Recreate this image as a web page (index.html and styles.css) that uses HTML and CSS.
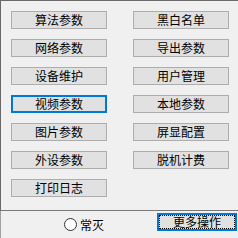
FILE: index.html
```html
<!DOCTYPE html>
<html>
<head>
    <link rel="stylesheet" href="styles.css">
</head>
<body>
    <div class="panel">
        <div class="btn">算法参数</div>
        <div class="btn">黑白名单</div>
        <div class="btn">网络参数</div>
        <div class="btn">导出参数</div>
        <div class="btn">设备维护</div>
        <div class="btn">用户管理</div>
        <div class="btn selected">视频参数</div>
        <div class="btn">本地参数</div>
        <div class="btn">图片参数</div>
        <div class="btn">屏显配置</div>
        <div class="btn">外设参数</div>
        <div class="btn">脱机计费</div>
        <div class="btn">打印日志</div>
    </div>
    <div class="footer">
        <div class="radio">
            <div class="circle"></div>
            <span>常灭</span>
        </div>
        <div class="more-button">更多操作</div>
    </div>
</body>
</html>
```

FILE: styles.css
```css
 body {
     margin: 0;
     width: 238px;
     height: 238px;
     overflow: hidden;
     background-color: #f0f0f0;
     font-family: "Noto Sans CJK SC", "Liberation Sans", sans-serif;
     font-size: 12px;
     color: #000;
 }
 .panel {
     box-sizing: border-box;
     height: 211px;
     border-top: 1px solid #696969;
     border-left: 1px solid #696969;
     border-bottom: 1px solid #7a7a7a;
     padding: 10px 0 0 10px;
     display: grid;
     grid-template-columns: 96px 96px;
     grid-auto-rows: 18px;
     column-gap: 26px;
     row-gap: 10px;
     align-content: start;
 }
 .btn {
     box-sizing: border-box;
     height: 18px;
     background-color: #e1e1e1;
     border: 1px solid #adadad;
     display: flex;
     justify-content: center;
     align-items: center;
     line-height: 1;
 }
 .selected {
     border: 2px solid #0078d7;
 }
 .footer {
     box-sizing: border-box;
     height: 27px;
     border-left: 1px solid #a0a0a0;
     display: flex;
     align-items: flex-start;
     padding-left: 63px;
     padding-top: 2px;
 }
 .radio {
     display: flex;
     align-items: center;
     gap: 3px;
     margin-top: 5px;
     line-height: 1;
 }
 .circle {
     box-sizing: border-box;
     width: 13px;
     height: 13px;
     border: 1px solid #333;
     border-radius: 50%;
     background-color: #fff;
 }
 .more-button {
     box-sizing: border-box;
     width: 80px;
     height: 18px;
     margin-left: auto;
     margin-right: 1px;
     background-color: #e1e1e1;
     border: 2px solid #0078d7;
     outline: 1px dotted #000;
     outline-offset: -3px;
     display: flex;
     justify-content: center;
     align-items: center;
     line-height: 1;
 }
```
